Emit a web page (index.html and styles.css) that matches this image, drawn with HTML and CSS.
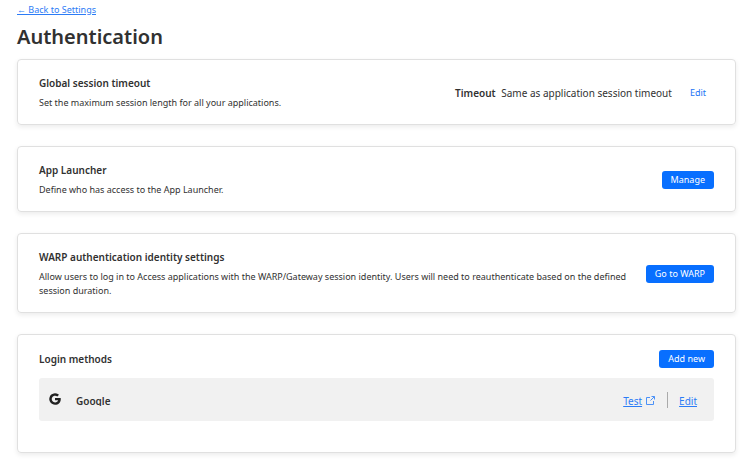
FILE: index.html
```html
<!DOCTYPE html>
<html lang="en">
<head>
<meta charset="utf-8">
<title>Authentication</title>
<link rel="stylesheet" href="styles.css">
</head>
<body>
<main class="page">
  <a class="back" href="#settings"><span class="arrow">←</span> Back to Settings</a>
  <h1 class="title">Authentication</h1>

  <section class="card">
    <div class="info">
      <h2 class="heading">Global session timeout</h2>
      <p class="text">Set the maximum session length for all your applications.</p>
    </div>
    <div class="timeout">
      <span><strong class="strong">Timeout</strong> <span class="value">Same as application session timeout</span></span>
      <button class="plain" type="button">Edit</button>
    </div>
  </section>

  <section class="card">
    <div class="info">
      <h2 class="heading">App Launcher</h2>
      <p class="text">Define who has access to the App Launcher.</p>
    </div>
    <button class="button" type="button">Manage</button>
  </section>

  <section class="card">
    <div class="info">
      <h2 class="heading">WARP authentication identity settings</h2>
      <p class="text">Allow users to log in to Access applications with the WARP/Gateway session identity. Users will need to reauthenticate based on the defined session duration.</p>
    </div>
    <button class="button" type="button">Go to WARP</button>
  </section>

  <section class="card card-list">
    <div class="list-head">
      <h2 class="heading">Login methods</h2>
      <button class="button" type="button">Add new</button>
    </div>
    <div class="method">
      <svg class="logo" viewBox="0 0 24 24" aria-hidden="true"><path d="M12 10h11.300c.2.900.2 1.500.2 2.300C23.500 19 19 23.500 12.200 23.500A11.500 11.500 0 1 1 20 3.700l-3.300 3.400A6.700 6.700 0 1 0 12.200 18.800c3.200 0 5.300-1.500 5.900-4.200H12z"/></svg>
      <span class="name">Google</span>
      <a class="link" href="#test">Test</a>
      <svg class="external" viewBox="0 0 9 9" aria-hidden="true"><path d="M4 1.500H.5v7h7V5M5.500.5h3v3M8.500.5 4.500 4.500"/></svg>
      <span class="divider"></span>
      <a class="link" href="#edit">Edit</a>
    </div>
  </section>
</main>
</body>
</html>
```
FILE: styles.css
```css
* {
  box-sizing: border-box;
}

body {
  margin: 0;
  background: #fff;
  color: #313131;
  font-family: "Segoe UI", "Noto Sans", "Open Sans", sans-serif;
  font-size: 9px;
  line-height: 14px;
}

.page {
  padding: 3px 5px 8px 17px;
}

.back,
.link {
  color: #2c7cf6;
  text-decoration: underline;
}

.back {
  display: block;
  width: fit-content;
}

.arrow {
  font-family: "Liberation Sans", sans-serif;
  line-height: 1;
}

.title {
  margin: 5px 0 7px;
  font-size: 20px;
  line-height: 30px;
  font-weight: 600;
}

.card {
  display: flex;
  align-items: center;
  justify-content: space-between;
  gap: 18px;
  margin-bottom: 21px;
  padding: 16px 21px 14px;
  border: 1px solid #e0e0e0;
  border-radius: 4px;
  box-shadow: 0 2px 5px rgba(0, 0, 0, 0.08);
}

.info {
  flex: 1;
}

.heading {
  margin: 0;
  font-size: 10px;
  line-height: 14px;
  font-weight: 600;
}

.text {
  margin: 6px 0 0;
}

.timeout {
  display: flex;
  align-items: center;
  gap: 18px;
  padding-right: 8px;
  font-size: 10px;
}

.strong {
  font-weight: 600;
}

.value {
  margin-left: 3px;
}

.plain {
  padding: 0;
  border: 0;
  background: none;
  color: #1a73f5;
  font: inherit;
  font-size: 9px;
}

.button {
  height: 18px;
  padding: 0 9px;
  border: 0;
  border-radius: 3px;
  background: #086fff;
  color: #fff;
  font: inherit;
  line-height: 18px;
  white-space: nowrap;
}

.card-list {
  display: block;
  padding: 15px 21px 31px;
}

.list-head {
  display: flex;
  align-items: center;
  justify-content: space-between;
  margin-bottom: 10px;
}

.method {
  display: flex;
  align-items: center;
  height: 43px;
  padding: 2px 17px 0 10px;
  border-radius: 3px;
  background: #f1f1f1;
  font-size: 10px;
}

.logo {
  width: 12px;
  height: 12px;
  margin: 0 15px 4px 0;
  fill: #222;
}

.name {
  flex: 1;
  overflow: hidden;
  font-weight: 600;
  line-height: 10px;
}

.external {
  width: 9px;
  height: 9px;
  margin: 0 12px 1px 4px;
  fill: none;
  stroke: #4b91f7;
}

.divider {
  width: 1px;
  height: 16px;
  margin: 0 11px 2px 0;
  background: #aaa;
}
```
